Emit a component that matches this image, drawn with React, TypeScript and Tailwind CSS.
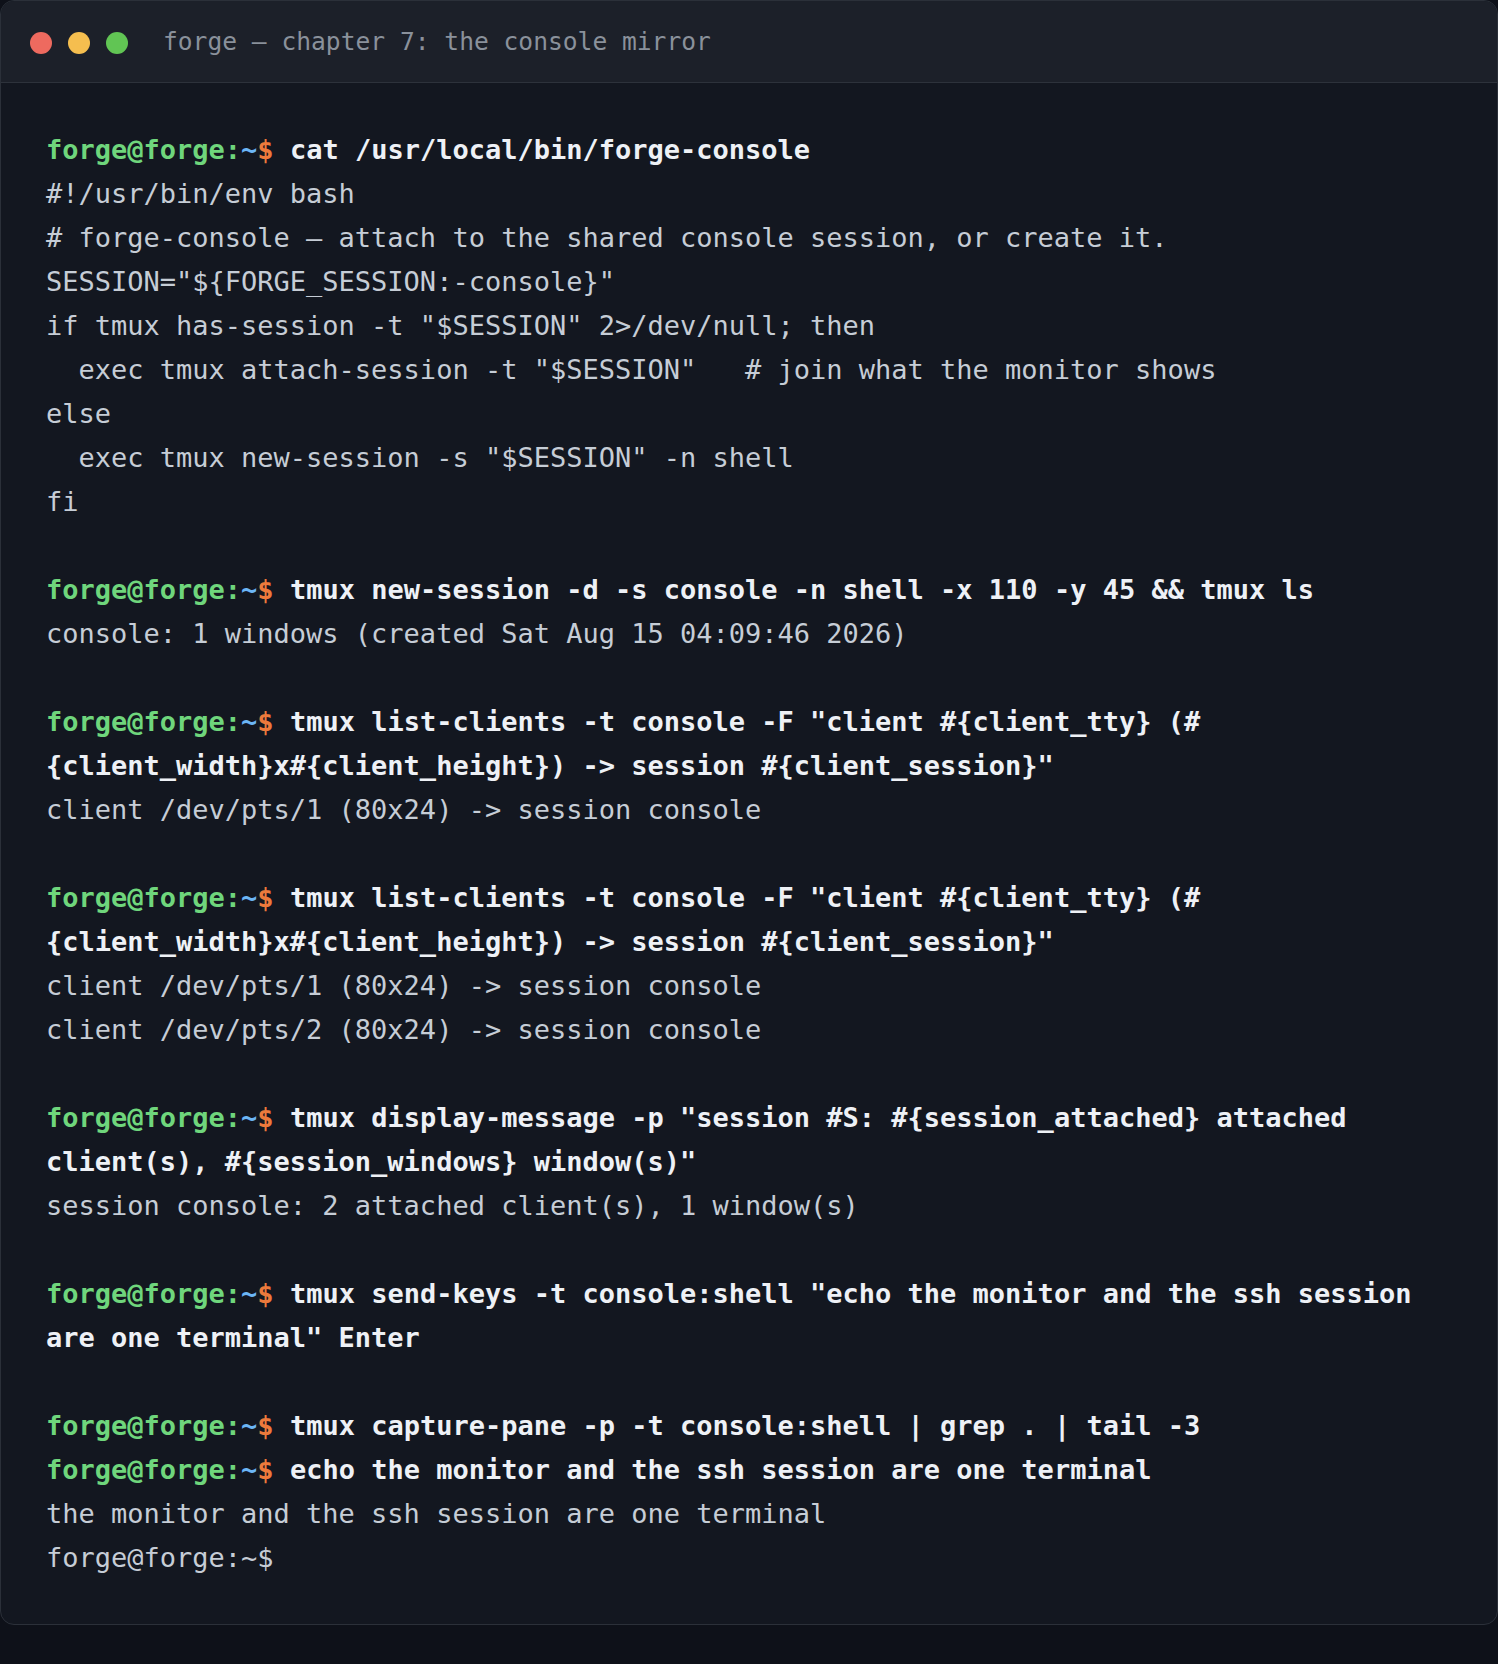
import React from "react";

type Line =
  | { kind: "cmd"; text: string }
  | { kind: "cont"; text: string }
  | { kind: "out"; text: string }
  | { kind: "blank" };

const lines: Line[] = [
  { kind: "cmd", text: "cat /usr/local/bin/forge-console" },
  { kind: "out", text: "#!/usr/bin/env bash" },
  { kind: "out", text: "# forge-console — attach to the shared console session, or create it." },
  { kind: "out", text: 'SESSION="${FORGE_SESSION:-console}"' },
  { kind: "out", text: 'if tmux has-session -t "$SESSION" 2>/dev/null; then' },
  { kind: "out", text: '  exec tmux attach-session -t "$SESSION"   # join what the monitor shows' },
  { kind: "out", text: "else" },
  { kind: "out", text: '  exec tmux new-session -s "$SESSION" -n shell' },
  { kind: "out", text: "fi" },
  { kind: "blank" },
  { kind: "cmd", text: "tmux new-session -d -s console -n shell -x 110 -y 45 && tmux ls" },
  { kind: "out", text: "console: 1 windows (created Sat Aug 15 04:09:46 2026)" },
  { kind: "blank" },
  { kind: "cmd", text: 'tmux list-clients -t console -F "client #{client_tty} (#' },
  { kind: "cont", text: '{client_width}x#{client_height}) -> session #{client_session}"' },
  { kind: "out", text: "client /dev/pts/1 (80x24) -> session console" },
  { kind: "blank" },
  { kind: "cmd", text: 'tmux list-clients -t console -F "client #{client_tty} (#' },
  { kind: "cont", text: '{client_width}x#{client_height}) -> session #{client_session}"' },
  { kind: "out", text: "client /dev/pts/1 (80x24) -> session console" },
  { kind: "out", text: "client /dev/pts/2 (80x24) -> session console" },
  { kind: "blank" },
  { kind: "cmd", text: 'tmux display-message -p "session #S: #{session_attached} attached' },
  { kind: "cont", text: 'client(s), #{session_windows} window(s)"' },
  { kind: "out", text: "session console: 2 attached client(s), 1 window(s)" },
  { kind: "blank" },
  { kind: "cmd", text: 'tmux send-keys -t console:shell "echo the monitor and the ssh session' },
  { kind: "cont", text: 'are one terminal" Enter' },
  { kind: "blank" },
  { kind: "cmd", text: "tmux capture-pane -p -t console:shell | grep . | tail -3" },
  { kind: "cmd", text: "echo the monitor and the ssh session are one terminal" },
  { kind: "out", text: "the monitor and the ssh session are one terminal" },
  { kind: "out", text: "forge@forge:~$" },
];

const Prompt = () => (
  <span className="font-bold">
    <span className="text-[#6fd67c]">forge@forge:</span>
    <span className="text-[#6cb6f5]">~</span>
    <span className="text-[#ec7a3c]">$</span>{" "}
  </span>
);

const App = () => {
  return (
    <div className="min-h-screen bg-[#0e1119]">
      <div className="rounded-[14px] border border-[#2b3039] bg-[#131720] overflow-hidden">
        {/* title bar */}
        <div className="h-[82px] flex items-center pt-[2px] px-[29px] bg-[#1c2029] border-b border-[#2d323b]">
          <div className="flex gap-[16px]">
            <span className="w-[22px] h-[22px] rounded-full bg-[#ee6a5f]" />
            <span className="w-[22px] h-[22px] rounded-full bg-[#f5be4f]" />
            <span className="w-[22px] h-[22px] rounded-full bg-[#61c554]" />
          </div>
          <span className="ml-[35px] font-['DejaVu_Sans_Mono',monospace] text-[24.6px] text-[#8a919b]">
            forge — chapter 7: the console mirror
          </span>
        </div>

        {/* terminal body */}
        <div className="px-[45px] pt-[45px] pb-[44px] font-['DejaVu_Sans_Mono',monospace] text-[27px] leading-[44px] text-[#c6cdd6] whitespace-pre">
          {lines.map((l, i) => {
            if (l.kind === "blank") return <div key={i} className="h-[44px]" />;
            if (l.kind === "cmd")
              return (
                <div key={i}>
                  <Prompt />
                  <span className="font-bold text-[#eef1f6]">{l.text}</span>
                </div>
              );
            if (l.kind === "cont")
              return (
                <div key={i} className="font-bold text-[#eef1f6]">
                  {l.text}
                </div>
              );
            return <div key={i}>{l.text}</div>;
          })}
        </div>
      </div>
    </div>
  );
};

export default App;
